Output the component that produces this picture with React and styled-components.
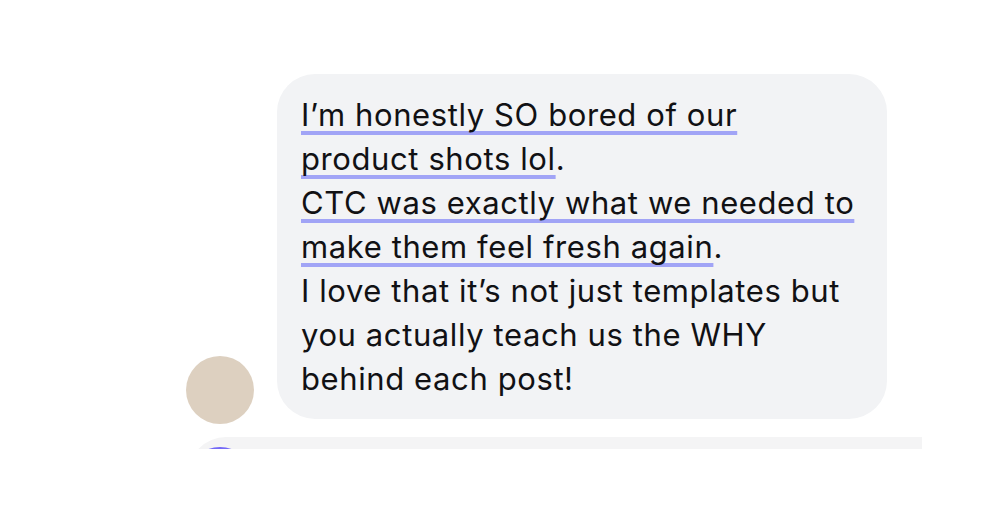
import styled, { createGlobalStyle } from "styled-components";

const GlobalStyle = createGlobalStyle`
    html, body {
        margin: 0;
        padding: 0;
        background: #ffffff;
    }
    body {
        font-family: Inter, "Noto Sans", "Liberation Sans", sans-serif;
        -webkit-font-smoothing: antialiased;
    }
`;

const Feed = styled.div`
    box-sizing: border-box;
    width: 922px;
    height: 449px;
    padding: 74px 0 0 186px;
    overflow: hidden;
    display: flex;
    flex-direction: column;
    gap: 18px;
`;

const MessageRow = styled.div`
    display: flex;
    align-items: flex-end;
    gap: 23px;
`;

const Avatar = styled.div`
    flex: none;
    width: 68px;
    height: 68px;
    border-radius: 50%;
    background: ${(p) => p.$color};
    margin-bottom: ${(p) => p.$drop || 0}px;
`;

const Bubble = styled.div`
    box-sizing: border-box;
    width: 610px;
    padding: 19px 20px 18px 24px;
    border-radius: 38px;
    background: #f2f3f5;
    color: #111114;
    font-size: 31px;
    line-height: 44px;
    letter-spacing: 0.6px;
    white-space: nowrap;
`;

const Line = styled.p`
    margin: 0;
`;

const Mark = styled.span`
    text-decoration: underline;
    text-decoration-color: #a1a4f6;
    text-decoration-thickness: 4px;
    text-underline-offset: 5px;
    text-decoration-skip-ink: none;
`;

const NextCard = styled.div`
    box-sizing: border-box;
    margin-left: 2px;
    width: 734px;
    height: 120px;
    flex: none;
    padding-top: 10px;
    border-radius: 38px 0 0 0;
    background: #f4f4f5;
`;

const NextAvatar = styled(Avatar)`
    margin-left: -2px;
    background: linear-gradient(135deg, #6d63f6, #8a7bf8);
`;

export default function App() {
    return (
        <>
            <GlobalStyle />
            <Feed>
                <MessageRow>
                    <Avatar $color="#ddd0c0" $drop={-5} />
                    <Bubble>
                        <Line>
                            <Mark>
                                I’m honestly SO bored of our
                                <br />
                                product shots lol
                            </Mark>
                            .
                        </Line>
                        <Line>
                            <Mark>
                                CTC was exactly what we needed to
                                <br />
                                make them feel fresh again
                            </Mark>
                            .
                        </Line>
                        <Line>
                            I love that it’s not just templates but
                            <br />
                            you actually teach us the WHY
                            <br />
                            behind each post!
                        </Line>
                    </Bubble>
                </MessageRow>
                <NextCard>
                    <NextAvatar />
                </NextCard>
            </Feed>
        </>
    );
}
